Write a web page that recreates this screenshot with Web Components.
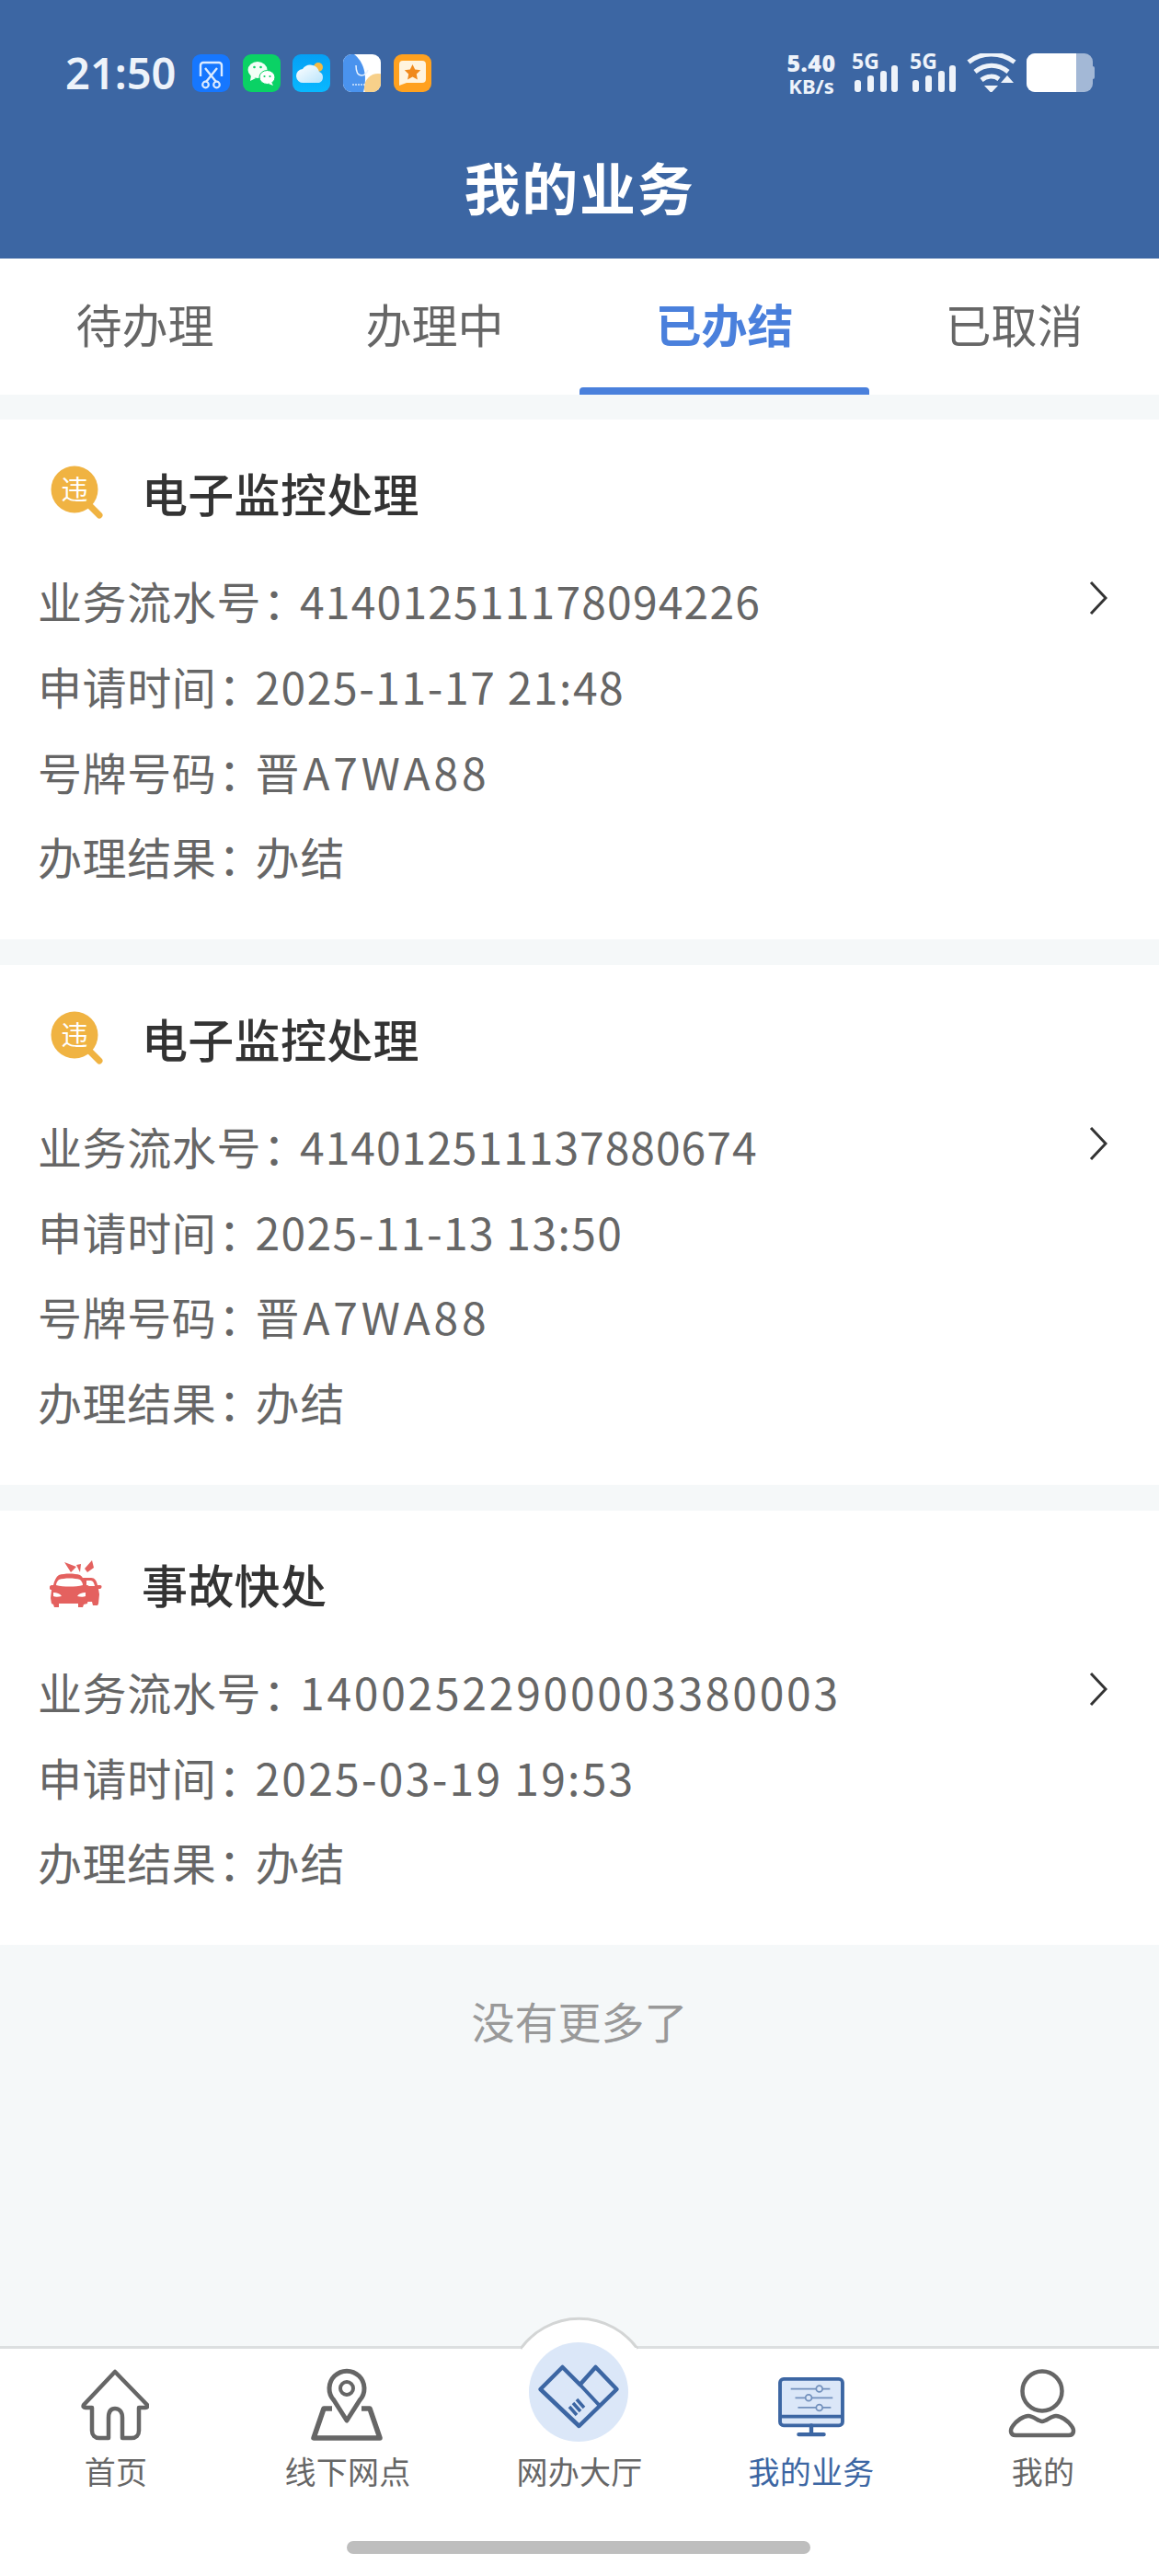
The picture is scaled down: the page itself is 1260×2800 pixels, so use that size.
<!DOCTYPE html>
<html lang="zh-CN"><head><meta charset="utf-8"><title>我的业务</title>
<style>
html,body{margin:0;padding:0;background:#f5f8f9}
body{font-family:"Noto Sans CJK SC","Noto Sans",sans-serif;color:#666;width:1260px;height:2800px}
</style></head><body>
<my-app>
  <status-bar slot="top"></status-bar>
  <app-header slot="top">我的业务</app-header>
  <tab-strip slot="top">
    <tab-item>待办理</tab-item><tab-item>办理中</tab-item><tab-item active>已办结</tab-item><tab-item>已取消</tab-item>
  </tab-strip>
  <record-card heading="电子监控处理" icon="wei">
    <info-row label="业务流水号" value="414012511178094226" track="1.2"></info-row>
    <info-row label="申请时间" value="2025-11-17 21:48" track="1.55"></info-row>
    <info-row label="号牌号码" value="晋A7WA88" track="3.8"></info-row>
    <info-row label="办理结果" value="办结" track="1.1"></info-row>
  </record-card>
  <record-card heading="电子监控处理" icon="wei">
    <info-row label="业务流水号" value="414012511137880674" track="1"></info-row>
    <info-row label="申请时间" value="2025-11-13 13:50" track="1.43"></info-row>
    <info-row label="号牌号码" value="晋A7WA88" track="3.8"></info-row>
    <info-row label="办理结果" value="办结" track="1.1"></info-row>
  </record-card>
  <record-card heading="事故快处" icon="crash">
    <info-row label="业务流水号" value="14002522900003380003" track="2.75"></info-row>
    <info-row label="申请时间" value="2025-03-19 19:53" track="2.25"></info-row>
    <info-row label="办理结果" value="办结" track="1.1"></info-row>
  </record-card>
  <end-note>没有更多了</end-note>
  <bottom-nav slot="bottom"></bottom-nav>
</my-app>
<script>
const F='"Noto Sans CJK SC","Noto Sans",sans-serif';
function def(name,html){
  customElements.define(name,class extends HTMLElement{
    constructor(){super();const r=this.attachShadow({mode:'open'});if(typeof html!=='function')r.innerHTML=html;}
    connectedCallback(){if(typeof html==='function')this.shadowRoot.innerHTML=html(this);}
  });
}
def('my-app',`<style>
:host{display:flex;flex-direction:column;height:2800px;width:1260px;overflow:hidden;background:#f5f8f9}
main{flex:1;display:flex;flex-direction:column;gap:28px;padding-top:27px;min-height:0}
</style><slot name="top"></slot><main><slot></slot></main><slot name="bottom"></slot>`);

def('status-bar',`<style>
:host{display:flex;height:122px;background:#3c66a3;box-sizing:border-box;padding:59px 0 0 71px;align-items:flex-start;color:#eef3fa;font-family:"Noto Sans",${F}}
.time{font:600 47px/41px "Noto Sans",sans-serif;width:138px;letter-spacing:0}
.tiles{display:flex;gap:13.7px}
.tiles svg{width:41px;height:41px;display:block}
.right{position:absolute;left:854px;top:58px;width:340px;height:42px}
.sp{position:absolute;left:0;top:0;width:56px;text-align:center;font-weight:700;line-height:1}
.sp b{display:block;font-size:25px;line-height:20px;letter-spacing:.5px}
.sp i{display:block;font-style:normal;font-size:22px;line-height:20px;margin-top:5px}
.g{position:absolute;top:-2px;font:700 23px/20px "Noto Sans",sans-serif}
.ic{position:absolute;top:0;left:0;width:340px;height:42px}
</style>
<div class="time">21:50</div>
<div class="tiles">
<svg viewBox="0 0 41 41"><rect width="41" height="41" rx="9" fill="#1677ff"/><path d="M9 24V12a3 3 0 0 1 3-3h17a3 3 0 0 1 3 3v12M14 15l12 15M27 15L15 30" fill="none" stroke="#dcebff" stroke-width="2.4"/><circle cx="14.500" cy="33" r="3.300" fill="none" stroke="#dcebff" stroke-width="2.200"/><circle cx="26.500" cy="33" r="3.300" fill="none" stroke="#dcebff" stroke-width="2.200"/></svg>
<svg viewBox="0 0 41 41"><rect width="41" height="41" rx="9" fill="#0ad265"/><ellipse cx="16" cy="17" rx="10.500" ry="9" fill="#f2fff6"/><path d="M9 23l-1 6 6-3z" fill="#f2fff6"/><ellipse cx="26.500" cy="25" rx="8.500" ry="7.500" fill="#fff" stroke="#0ad265"/><path d="M31 30l2 4-5-2z" fill="#fff"/><circle cx="12.500" cy="14" r="1.300" fill="#0ad265"/><circle cx="19.500" cy="14" r="1.300" fill="#0ad265"/><circle cx="23.500" cy="24" r="1.100" fill="#0ad265"/><circle cx="29.500" cy="24" r="1.100" fill="#0ad265"/></svg>
<svg viewBox="0 0 41 41"><defs><linearGradient id="w" x1="0" y1="0" x2="0" y2="1"><stop offset="0" stop-color="#05a0f5"/><stop offset="1" stop-color="#08b8ff"/></linearGradient><linearGradient id="c" x1="0" y1="0" x2="1" y2="1"><stop offset="0" stop-color="#fff"/><stop offset="1" stop-color="#b9e4fb"/></linearGradient></defs><rect width="41" height="41" rx="9" fill="url(#w)"/><circle cx="28" cy="14" r="5" fill="#f5b942"/><path d="M12 31a7.500 7.500 0 0 1-1-15 10 10 0 0 1 18 3 6.500 6.500 0 0 1 0 12z" fill="url(#c)"/></svg>
<svg viewBox="0 0 41 41"><defs><clipPath id="b"><rect width="41" height="41" rx="9"/></clipPath></defs><g clip-path="url(#b)"><rect width="41" height="41" fill="#fff"/><path d="M0 0H12C22 8 27 22 22 41H0z" fill="#4a93ee"/><circle cx="38" cy="36" r="15" fill="#f7d08a"/><path d="M14 12c0 8 2 11 6 11s6-3 7-6" fill="none" stroke="#eaf3ff" stroke-width="1.500"/><path d="M10 33h14" stroke="#d8e8fb" stroke-width="1.500" stroke-dasharray="2 1"/></g></svg>
<svg viewBox="0 0 41 41"><rect width="41" height="41" rx="9" fill="#ffa11f"/><path d="M10 7h21a4 4 0 0 1 4 4v16a4 4 0 0 1-4 4H14l-8 3V11a4 4 0 0 1 4-4z" fill="#fff4df"/><path d="M20.500 11l2.700 5.500 6 .8-4.400 4.200 1.100 6-5.400-2.900-5.400 2.900 1.100-6-4.400-4.200 6-.8z" fill="#f08a1d"/></svg>
</div>
<div class="right">
<div class="sp"><b>5.40</b><i>KB/s</i></div>
<span class="g" style="left:72px">5G</span><span class="g" style="left:135px">5G</span>
<svg class="ic" viewBox="0 0 340 42">
<g fill="#eef3fa"><rect x="75" y="29" width="7" height="13" rx="3"/><rect x="89" y="24" width="7" height="18" rx="3"/><rect x="103" y="19" width="7" height="23" rx="3"/><rect x="115" y="13" width="7" height="29" rx="3"/><rect x="138" y="29" width="7" height="13" rx="3"/><rect x="152" y="24" width="7" height="18" rx="3"/><rect x="166" y="19" width="7" height="23" rx="3"/><rect x="178" y="13" width="7" height="29" rx="3"/></g>
<g fill="none" stroke="#eef3fa" stroke-width="5"><path d="M199 9.500C213 -2 234 -2 249 9.500"/><path d="M206 20C217 11 231 11 242 20"/><path d="M213 29C219 24 227 24 232 28"/></g><path d="M216 35h15l-7.500 8z M234 32l7-8 7 8z" fill="#eef3fa"/>
<rect x="262" y="0" width="72" height="42" rx="9" fill="#a3b8d6"/><path d="M271 0h45v42h-45a9 9 0 0 1-9-9V9a9 9 0 0 1 9-9z" fill="#fff"/><rect x="332" y="14" width="4" height="14" rx="2" fill="#a3b8d6"/></svg>
</div>`);

def('app-header',`<style>
:host{display:flex;height:159px;background:#3c66a3;color:#fff;justify-content:center;box-sizing:border-box;padding-top:45px;font:600 61px/72px ${F};letter-spacing:1.800px}
</style><slot></slot>`);

def('tab-strip',`<style>:host{display:grid;grid-template-columns:repeat(4,315px);height:148px;background:#fff}</style><slot></slot>`);
def('tab-item',`<style>
:host{display:flex;justify-content:center;align-items:center;padding-bottom:8px;box-sizing:border-box;position:relative;color:#666;font:400 50px/60px ${F}}
:host([active]){color:#4a80dc;font-weight:700}
:host([active])::after{content:"";position:absolute;left:0;right:0;bottom:0;height:8px;background:#4a80dc;border-radius:4px 4px 0 0}
</style><slot></slot>`);

const wei=`<svg width="60" height="60" viewBox="0 0 60 60"><circle cx="27" cy="27" r="25.500" fill="#f0b342"/><path d="M45 46l9 9" stroke="#f0b342" stroke-width="7" stroke-linecap="round"/><text x="27" y="37.500" text-anchor="middle" font-size="29" fill="#fff" font-family='"Noto Sans CJK SC",sans-serif'>违</text></svg>`;
const crash=`<svg width="60" height="60" viewBox="0 0 60 60"><g fill="#e4615f"><path d="M16 7l13 5-6 6zM29 10l5-1-1 9zM38 14l8-9 2 8-7 5z"/><path d="M36 24h9c4 0 6 3 7 8h3c2 0 2 3 0 4h-2l1 6-1 10-1 2h-5l-1-4h-8z"/></g><path d="M40 27h4c3 0 4 2 5 6H40z" fill="#fff"/><g fill="#e4615f"><path d="M10 21c6-2 17-2 23 0 3 2 5 6 6 11h2c3 1 3 4 1 5h-1l1 9-1 6-4 1-1 3h-5v-4H10v4H5l-1-3-2-1-1-6 1-9H1c-2-1-2-4 1-5h2c1-5 3-9 6-11z"/></g><path d="M10 26c6-2 17-2 23 0 2 2 3 4 3 6-8 2-21 2-29 0 0-2 1-4 3-6z" fill="#fff"/><path d="M4 40c4 0 7 1 9 4-4 1-7 1-9 0zM39 40c-4 0-7 1-9 4 4 1 7 1 9 0z" fill="#fff"/></svg>`;
def('record-card',h=>`<style>
:host{display:block;background:#fff;padding:52px 0 44px;box-sizing:border-box;position:relative}
.t{display:flex;align-items:center;height:54px;margin-bottom:44px;padding-left:54px}
.i{width:60px;height:60px;margin-right:40px;display:flex;align-items:center;justify-content:center}
.n{font:500 50px/54px ${F};color:#333;letter-spacing:.3px}
.c{position:absolute;left:1184px;top:176px;width:20px;height:36px}
</style>
<div class="t"><div class="i">${h.getAttribute('icon')==='crash'?crash:wei}</div><div class="n">${h.getAttribute('heading')||''}</div></div>
<slot></slot>
<svg class="c" viewBox="0 0 20 36"><path d="M2 1l16 17L2 35" fill="none" stroke="#333" stroke-width="3"/></svg>`);
def('info-row',h=>`<style>
:host{display:flex;height:92.700px;align-items:center;padding-left:41px;font:400 48px/60px ${F};color:#666;letter-spacing:.6px;white-space:pre}
.c{display:inline-block;width:42px;font-feature-settings:"palt";padding-left:2px;box-sizing:border-box}
.v{letter-spacing:${h.getAttribute('track')||1.1}px}
</style><span>${h.getAttribute('label')}</span><span class="c">：</span><span class="v">${h.getAttribute('value')||''}</span>`);
def('end-note',`<style>:host{display:flex;justify-content:center;margin-top:24px;font:400 47px/60px ${F};color:#999;}</style><slot></slot>`);

const ico={
home:`<svg style="margin:0 2px 0 0" width="74" height="78" viewBox="0 0 74 78"><path d="M37 3L3 39c-1 2 0 3 2 3h7v25c0 5 3 8 8 8h10V53c0-7 3-10 7-10s8 3 8 10v22h10c5 0 8-3 8-8V42h7c2 0 3-1 2-3z" fill="none" stroke="#666" stroke-width="4.500" stroke-linejoin="round"/></svg>`,
map:`<svg style="margin:0 2px 0 0" width="80" height="80" viewBox="0 0 80 80"><path d="M40 57L26 35a19 19 0 1 1 28 0z" fill="none" stroke="#666" stroke-width="5" stroke-linejoin="round"/><circle cx="40" cy="22" r="7" fill="none" stroke="#666" stroke-width="4"/><path d="M24 44H15L4 76h72L65 44h-9" fill="none" stroke="#666" stroke-width="5.500" stroke-linejoin="round"/></svg>`,
hand:`<svg width="108" height="108" viewBox="0 0 108 108"><circle cx="54" cy="54" r="54" fill="#dbe7f8"/><g fill="none" stroke="#3c66a3" stroke-width="4.500" stroke-linejoin="round"><path d="M23 51L47 27 66 46 83 27 106 51 65 91z" transform="translate(-10.500 0)"/><path d="M55.500 46L77 69" stroke-width="4"/></g><g stroke="#3c66a3" stroke-width="3.500"><path d="M44 70l8 9M48 66l8 9M52 62l8 9"/></g></svg>`,
mon:`<svg style="margin-top:3px" width="76" height="66" viewBox="0 0 76 68"><rect x="3" y="3" width="70" height="52" rx="4" fill="#dbe7f8" stroke="#3c66a3" stroke-width="4"/><path d="M3 45h70" stroke="#3c66a3" stroke-width="4"/><path d="M38 55v10M24 65h28" stroke="#3c66a3" stroke-width="4.500" stroke-linecap="round"/><g stroke="#7391bd" stroke-width="1.800" fill="#dbe7f8"><path d="M15 14h44M20 24h42M23 35h37"/><circle cx="47" cy="14" r="3.500"/><circle cx="35" cy="24" r="3.500"/><circle cx="47" cy="35" r="3.500"/></g></svg>`,
user:`<svg style="margin:0 2px 2px 0" width="74" height="76" viewBox="0 0 74 76"><circle cx="37" cy="24" r="21.500" fill="none" stroke="#666" stroke-width="4.500"/><path d="M8 72c-6 0-6-6-3-10 4-6 12-11 17-11 6 0 10 6 15 6s9-6 15-6c5 0 13 5 17 11 3 4 3 10-3 10z" fill="none" stroke="#666" stroke-width="4.500" stroke-linejoin="round"/></svg>`};
def('nav-item',h=>`<style>
:host{display:flex;flex-direction:column;align-items:center;font:400 34px/44px ${F};color:#666;letter-spacing:.3px;position:relative}
:host([active]){color:#3c66a3}
.ic{height:88px;margin-bottom:6px;display:flex;align-items:center;justify-content:center}
</style><div class="ic">${ico[h.getAttribute('icon')]||''}</div><slot></slot>`);
def('bottom-nav',`<style>
:host{display:block;height:250px;background:#fff;border-top:3px solid #dcdfe0;box-sizing:border-box;position:relative}
.b{position:absolute;left:566px;top:-35px;width:128px;height:36px;display:block}
.g{display:grid;grid-template-columns:repeat(5,252px);padding-top:17px;position:relative}
.h{position:absolute;left:377px;top:209px;width:504px;height:14px;border-radius:7px;background:#bebebe}
.big{position:absolute;left:575px;top:-7px}
</style>
<svg class="b" viewBox="0 0 128 36"><path d="M0 35A78 78 0 0 1 127 35" fill="#fff" stroke="#d3d5d5" stroke-width="3"/><path d="M2 36h124v-2H2z" fill="#fff"/></svg>
<div class="g">
<nav-item icon="home">首页</nav-item><nav-item icon="map">线下网点</nav-item>
<nav-item icon="hand2">网办大厅</nav-item>
<nav-item icon="mon" active>我的业务</nav-item><nav-item icon="user">我的</nav-item>
</div>
<div class="big">${ico.hand}</div>
<div class="h"></div>`);
</script>
</body></html>
